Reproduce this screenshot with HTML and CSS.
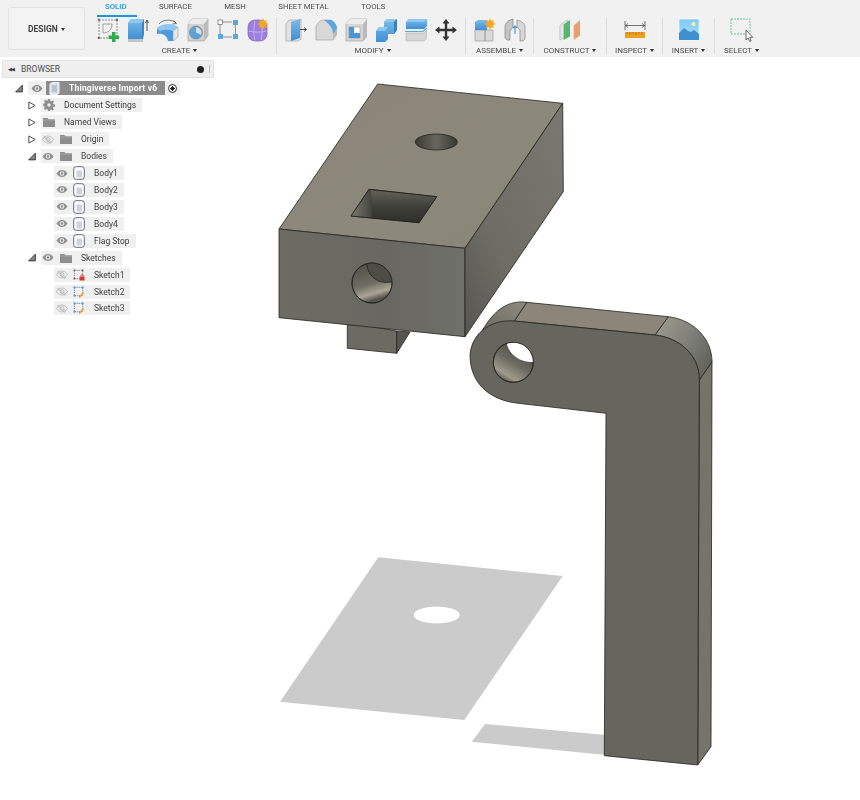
FILE: index.html
```html
<!DOCTYPE html>
<html lang="en">
<head>
<meta charset="utf-8">
<title>Thingiverse Import v6</title>
<link rel="stylesheet" href="styles.css">
</head>
<body>
<svg class="defs" width="0" height="0" aria-hidden="true">
  <defs>
    <symbol id="eye" viewBox="0 0 12 8"><path d="M.5 4C2 1.600 4 .5 6 .5S10 1.600 11.500 4C10 6.400 8 7.500 6 7.500S2 6.400 .5 4Z" fill="#8f8f8f"/><circle cx="6" cy="4" r="2.300" fill="#f0f0f0"/><circle cx="6" cy="4" r="1.300" fill="#8f8f8f"/></symbol>
    <symbol id="eye-off" viewBox="0 0 12 9"><path d="M.5 4.500C2 2.100 4 1 6 1s4 1.100 5.500 3.500C10 6.900 8 8 6 8S2 6.900 .5 4.500Z" fill="none" stroke="#b4b4b4" stroke-width=".8"/><circle cx="6" cy="4.500" r="2" fill="none" stroke="#b4b4b4" stroke-width=".8"/><path d="M2 .8 10 8.200M1 1.500 9 8.800" stroke="#b4b4b4" stroke-width=".7"/></symbol>
    <symbol id="folder" viewBox="0 0 12 10"><path d="M0 1h4.500l1 1.200H12V10H0Z" fill="#8e8e8e"/><path d="M0 3h12" stroke="#b5b5b5" stroke-width=".6"/></symbol>
    <symbol id="body" viewBox="0 0 12 14"><rect x=".7" y=".7" width="10.600" height="12.600" rx="2.500" fill="#fff" stroke="#5f6a7d" stroke-width="1"/><rect x="3.500" y="4.500" width="5.500" height="7" fill="#ccd3dc"/></symbol>
    <symbol id="sketch" viewBox="0 0 13 13"><rect x="1.500" y="1.500" width="9" height="9" fill="none" stroke="#555" stroke-width=".7" stroke-dasharray="1.500 .8"/><g fill="#4a9fe0"><rect x=".5" y=".5" width="2" height="2"/><rect x="9.500" y=".5" width="2" height="2"/><rect x=".5" y="9.500" width="2" height="2"/></g><path d="M7 12 11.500 7" stroke="#f0a030" stroke-width="1.500"/><path d="M6.500 12.500 8 12 7 11Z" fill="#d9534f"/></symbol>
    <symbol id="sketch-lock" viewBox="0 0 13 13"><rect x="1.500" y="1.500" width="9" height="9" fill="none" stroke="#555" stroke-width=".7" stroke-dasharray="1.500 .8"/><g fill="#555"><rect x=".7" y=".7" width="1.600" height="1.600"/><rect x="9.700" y=".7" width="1.600" height="1.600"/><rect x=".7" y="9.700" width="1.600" height="1.600"/></g><rect x="7.200" y="8.200" width="5.300" height="4.300" fill="#d9363a"/><path d="M8.500 8.200V7a1.400 1.400 0 0 1 2.700 0v1.200" fill="none" stroke="#d9363a" stroke-width=".9"/></symbol>
    <linearGradient id="gTop" x1="0" y1="0" x2="1" y2="1"><stop offset="0" stop-color="#8a8578"/><stop offset=".6" stop-color="#8d887c"/><stop offset="1" stop-color="#888478"/></linearGradient>
    <linearGradient id="gFront" x1="0" y1="0" x2="1" y2="0"><stop offset="0" stop-color="#6c6b64"/><stop offset=".6" stop-color="#686761"/><stop offset="1" stop-color="#70706b"/></linearGradient>
    <linearGradient id="gSide" x1="0" y1="1" x2="1" y2="0"><stop offset="0" stop-color="#565651"/><stop offset=".35" stop-color="#6e6c65"/><stop offset="1" stop-color="#7a7870"/></linearGradient>
    <linearGradient id="gHoleTop" x1="0" y1="0" x2="1" y2="0"><stop offset="0" stop-color="#3a3a35"/><stop offset=".5" stop-color="#68665c"/><stop offset="1" stop-color="#383833"/></linearGradient>
    <linearGradient id="gHoleFront" x1="0" y1="0" x2=".3" y2="1"><stop offset="0" stop-color="#4a4a44"/><stop offset=".6" stop-color="#6f6c62"/><stop offset=".85" stop-color="#aba598"/><stop offset="1" stop-color="#55544d"/></linearGradient>
    <linearGradient id="gWall" x1="0" y1="0" x2="0" y2="1"><stop offset="0" stop-color="#63625a"/><stop offset=".5" stop-color="#3f3f3a"/><stop offset="1" stop-color="#2e2e2a"/></linearGradient>
    <linearGradient id="gWallL" x1="0" y1="0" x2="1" y2="0"><stop offset="0" stop-color="#7a7a70"/><stop offset="1" stop-color="#44443e"/></linearGradient>
    <linearGradient id="gArcL" x1="0" y1="1" x2="1" y2="0"><stop offset="0" stop-color="#66655e"/><stop offset="1" stop-color="#8f8a7e"/></linearGradient>
    <linearGradient id="gArcR" x1="0" y1="0" x2="1" y2=".6"><stop offset="0" stop-color="#a29c8f"/><stop offset=".6" stop-color="#7f7f79"/><stop offset="1" stop-color="#65655f"/></linearGradient>
    <linearGradient id="gHoleFlag" x1=".9" y1="0" x2=".3" y2="1"><stop offset="0" stop-color="#3e3e38"/><stop offset=".55" stop-color="#6c6a60"/><stop offset=".85" stop-color="#a09a8c"/><stop offset="1" stop-color="#55544d"/></linearGradient>
    <linearGradient id="iBlue" x1="0" y1="0" x2="0" y2="1"><stop offset="0" stop-color="#7cbcec"/><stop offset="1" stop-color="#3f8fd0"/></linearGradient>
    <linearGradient id="iSky" x1="0" y1="0" x2="0" y2="1"><stop offset="0" stop-color="#7fcaf8"/><stop offset="1" stop-color="#a8ddfb"/></linearGradient>
    <clipPath id="cHoleFront"><circle cx="372" cy="283" r="20"/></clipPath>
    <clipPath id="cHoleFlag"><circle cx="513.300" cy="362.300" r="20"/></clipPath>
  </defs>
</svg>

<header class="toolbar">
  <button class="design" type="button">DESIGN <span class="caret"></span></button>
  <div class="ribbon">
    <nav class="tabs">
      <span class="tab tab-active">SOLID</span>
      <span class="tab">SURFACE</span>
      <span class="tab">MESH</span>
      <span class="tab">SHEET METAL</span>
      <span class="tab">TOOLS</span>
    </nav>
    <div class="groups">
      <section class="group g-create">
        <div class="icons">
          <svg class="ico" viewBox="0 0 22 24"><rect x="2" y="2" width="18" height="18" fill="none" stroke="#777" stroke-width=".8" stroke-dasharray="2 1"/><g fill="#666"><rect x=".8" y=".8" width="2" height="2"/><rect x="19" y=".8" width="2" height="2"/><rect x=".8" y="19" width="2" height="2"/></g><path d="M6 6h9M6 6v9M15 6c0 6-4 9-9 9" fill="none" stroke="#999" stroke-width=".9"/><path d="M15 14h3.500v3.500H22v3.500h-3.500V24H15v-3H11.500v-3.500H15Z" fill="#2eaa4a"/></svg>
          <svg class="ico" viewBox="0 0 22 24"><path d="M1 21h15v3H1Z" fill="#c4c4c4"/><path d="M1 5 4 1h13v15l-1 5H1Z" fill="url(#iBlue)"/><path d="M1 5h14l2-4H4Z" fill="#8cc8f2"/><path d="M15 5l2-4v15l-2 5Z" fill="#3a86c4"/><path d="M20 13V2.500M18.500 5 20 2l1.500 3" fill="none" stroke="#444" stroke-width=".9"/></svg>
          <svg class="ico" viewBox="0 0 22 24"><path d="M0 10C5 5 16 5 21 9L16 13C12 11 6 11 3 13Z" fill="#8cc8f2"/><path d="M0 10 3 13C6 11 12 11 16 13V23H11C10 17 5 15 0 16Z" fill="#4a9ade"/><path d="M16 13 21 9V19L16 23Z" fill="#e8e8e8" stroke="#888" stroke-width=".5"/><path d="M2 6C6 1 15 1 19 5M16.500 2.500 19.500 5.500 15.500 6" fill="none" stroke="#555" stroke-width=".8"/></svg>
          <svg class="ico" viewBox="0 0 22 24"><path d="M1 6 5 1h16v17l-4 5H1Z" fill="#d2d2d2" stroke="#9a9a9a" stroke-width=".6"/><path d="M1 6h16l4-5H5Z" fill="#ececec"/><path d="M17 6l4-5v17l-4 5Z" fill="#bcbcbc"/><circle cx="9" cy="14.500" r="6.500" fill="#5aa3dc" stroke="#777" stroke-width=".6"/><path d="M9 14.500V9a6 6 0 0 1 5.400 8Z" fill="#dcdcdc"/></svg>
          <svg class="ico" viewBox="0 0 22 24"><path d="M6 4h9M3 7v9M18.500 7v9M6 19h9" stroke="#777" stroke-width=".8"/><rect x="1" y="2" width="4.500" height="4.500" fill="#fff" stroke="#666" stroke-width=".7"/><rect x="16" y="2" width="5" height="5" fill="#5ba7e0"/><rect x="1" y="16" width="5" height="5" fill="#5ba7e0"/><rect x="16" y="16" width="5" height="5" fill="#5ba7e0"/></svg>
          <svg class="ico" viewBox="0 0 22 24"><rect x="1" y="2" width="19" height="21" rx="7" fill="#9c7fe0" stroke="#7a5ab8" stroke-width=".7"/><path d="M1.500 13c5 1.500 13 1.500 18 0M8 2.500C6.500 9 6.500 16 8 22.500M14 2.500c1.500 6.500 1.500 13 0 20" fill="none" stroke="#c9b4ee" stroke-width=".9"/><path d="M16 0l1.200 3 2.800-1-1 2.800 3 1.200-3 1.200 1 2.800-2.800-1L16 12l-1.200-3-2.800 1 1-2.800-3-1.200 3-1.200-1-2.800 2.800 1Z" fill="#f5a623"/></svg>
        </div>
        <div class="label">CREATE <span class="caret"></span></div>
      </section>
      <section class="group g-modify">
        <div class="icons">
          <svg class="ico" viewBox="0 0 22 24"><path d="M1 6 4 2h9l3-1v20l-3 2H1Z" fill="#e2e2e2" stroke="#999" stroke-width=".6"/><path d="M6 4l9-3v19l-9 3Z" fill="url(#iBlue)"/><path d="M15 11.500h6M19 9.500l2.500 2-2.500 2" fill="none" stroke="#444" stroke-width="1"/></svg>
          <svg class="ico" viewBox="0 0 22 24"><path d="M1 8C3 4 6 2 9 2h6c4 1 7 5 7 10v4l-4 6H1Z" fill="#d8d8d8" stroke="#999" stroke-width=".6"/><path d="M9 2h7c3 1 6 5 6 9l-4 5C18 10 14 6 9 2Z" fill="#5ba7e0"/><path d="M18 16l4-5v5l-4 6Z" fill="#bbb"/></svg>
          <svg class="ico" viewBox="0 0 22 24"><path d="M1 6 5 1h17v17l-4 5H1Z" fill="#d6d6d6" stroke="#999" stroke-width=".6"/><path d="M1 6h17l4-5H5Z" fill="#ececec"/><path d="M18 6l4-5v17l-4 5Z" fill="#bbb"/><rect x="4" y="9" width="11" height="11" fill="#fff" stroke="#888" stroke-width=".5"/><path d="M4 9h5v6h6v5H4Z" fill="#4a97d6"/></svg>
          <svg class="ico" viewBox="0 0 22 24"><path d="M1 13l3-4h5V4l3-3h10v11l-3 4h-6v5l-3 3H1Z" fill="url(#iBlue)"/><path d="M9 4h10l3-3H12ZM1 13h9l3-4H4Z" fill="#8cc8f2"/><path d="M19 4l3-3v11l-3 4Z" fill="#3a7fbf"/></svg>
          <svg class="ico" viewBox="0 0 22 24"><path d="M1 15h18l3-3v8l-3 3H1Z" fill="#d6d6d6" stroke="#aaa" stroke-width=".5"/><path d="M1 4 4 1h18v7l-3 3H1Z" fill="url(#iBlue)"/><path d="M1 4h18l3-3H4Z" fill="#8cc8f2"/><path d="M0 13.500h18L22 10" fill="none" stroke="#5ba7e0" stroke-width="1.200"/></svg>
          <svg class="ico" viewBox="0 0 22 24"><path d="M11 1l3.500 4.500h-2.300v5.300h5.300V8.500L22 12l-4.500 3.500v-2.300h-5.300v5.300h2.300L11 23l-3.500-4.500h2.300v-5.300H4.500v2.300L0 12l4.500-3.500v2.300h5.300V5.500H7.500Z" fill="#333"/></svg>
        </div>
        <div class="label">MODIFY <span class="caret"></span></div>
      </section>
      <section class="group g-assemble">
        <div class="icons">
          <svg class="ico" viewBox="0 0 22 24"><path d="M1 12h10v11H1ZM11 12h8v11h-8Z" fill="#dadada" stroke="#8d8d8d" stroke-width=".6"/><path d="M1 4l3-2h9v10H1Z" fill="url(#iBlue)"/><path d="M16 0l1.200 3 2.800-1-1 2.800 3 1.200-3 1.200 1 2.800-2.800-1L16 12l-1.200-3-2.800 1 1-2.800-3-1.200 3-1.200-1-2.800 2.800 1Z" fill="#f5a623"/></svg>
          <svg class="ico" viewBox="0 0 22 24"><path d="M1 8c1-4 4-6 8-7v8l-3 4v9H3l-2-2Z" fill="#c5c5c5" stroke="#777" stroke-width=".6"/><path d="M13 2c5 1 8 4 8 7v12l-2 2h-3V12l-3-3Z" fill="#d8d8d8" stroke="#777" stroke-width=".6"/><path d="M11 8v8M9 10l2-2 2 2" fill="none" stroke="#4a97d6" stroke-width="1.100"/></svg>
        </div>
        <div class="label">ASSEMBLE <span class="caret"></span></div>
      </section>
      <section class="group g-construct">
        <div class="icons">
          <svg class="ico" viewBox="0 0 24 24"><path d="M1 7l8-6v17l-8 5Z" fill="#e6e6e6" stroke="#999" stroke-width=".5"/><path d="M5 6l7-5v18l-7 4Z" fill="#55b86e"/><path d="M16 7l7-6v17l-7 5Z" fill="#e8a070"/></svg>
        </div>
        <div class="label">CONSTRUCT <span class="caret"></span></div>
      </section>
      <section class="group g-inspect">
        <div class="icons">
          <svg class="ico" viewBox="0 0 22 24"><path d="M1 3v9M21 3v9M1 7.500h20M4 5.500 1.500 7.500 4 9.500M18 5.500l2.500 2-2.500 2" fill="none" stroke="#555" stroke-width=".8"/><rect x="1" y="14" width="20" height="6" fill="#f0a020"/><path d="M3 14v2M6 14v3M9 14v2M12 14v3M15 14v2M18 14v3" stroke="#8a5a10" stroke-width=".6"/></svg>
        </div>
        <div class="label">INSPECT <span class="caret"></span></div>
      </section>
      <section class="group g-insert">
        <div class="icons">
          <svg class="ico" viewBox="0 0 22 24"><rect x="1" y="1" width="20" height="21" fill="url(#iSky)" stroke="#fff" stroke-width=".6"/><path d="M1 15l5-5 4 3 3 1 3-2 5 4v6H1Z" fill="#3f8fcc"/><circle cx="15.500" cy="6" r="2" fill="#f5efb0"/></svg>
        </div>
        <div class="label">INSERT <span class="caret"></span></div>
      </section>
      <section class="group g-select">
        <div class="icons">
          <svg class="ico ico-select" viewBox="0 0 24 24"><rect x="1" y="1" width="19" height="15" fill="none" stroke="#5cc184" stroke-width=".9" stroke-dasharray="2 1"/><path d="M16 12v10l2.200-2 1.500 3.500 1.500-.7-1.500-3.300 3-.2Z" fill="#fff" stroke="#444" stroke-width=".8"/></svg>
        </div>
        <div class="label">SELECT <span class="caret"></span></div>
      </section>
    </div>
  </div>
</header>

<main class="viewport">
  <svg class="model" viewBox="0 57 860 743" aria-label="3D model">
    <g class="shadow">
      <path fill-rule="evenodd" d="M378.300 557.300 562.700 576 464.300 720 280 701.700ZM413.700 615a23 8.500 0 1 0 46 0a23 8.500 0 1 0-46 0Z"/>
      <path d="M485 724 606 735V755L471.700 741.700Z"/>
    </g>

    <g class="edge">
      <path fill="#6b6a63" d="M347.300 322V348.300L396.700 353.300V331Z"/>
      <path fill="#55544e" d="M396.700 331V353.300L410 332Z"/>
      <path fill="url(#gTop)" d="M377.700 84 562.700 103.300 465 248.300 279 229Z"/>
      <path fill="url(#gFront)" d="M279 229 465 248.300V336.700L279 317.700Z"/>
      <path fill="url(#gSide)" d="M465 248.300 562.700 103.300 563.300 191.700 465 336.700Z"/>
      <ellipse cx="436.300" cy="142" rx="21" ry="8" fill="url(#gHoleTop)"/>
      <path fill="#34342f" d="M351 216 369 189.300 436.700 196.700 419 222.700Z"/>
      <path fill="url(#gWall)" stroke="none" d="M371 190 436.700 196.700 419 222.700 372 217.500Z"/>
      <path fill="url(#gWallL)" stroke="none" d="M351 216 369 189.300 371 190 372 217.500Z"/>
      <path fill="none" d="M351 216 369 189.300 436.700 196.700 419 222.700Z"/>
      <circle cx="372" cy="283" r="20" fill="url(#gHoleFront)"/>
      <path clip-path="url(#cHoleFront)" fill="#4d4c46" d="M366.500 262C367.500 277 379 286 395 281L395 258Z"/>
      <circle cx="372" cy="283" r="20" fill="none"/>
    </g>

    <g class="edge">
      <path fill="#76746a" d="M699.300 380 712 361.700 711 746.700 697.700 765Z"/>
      <path fill="url(#gArcR)" d="M668.300 316.700C695 320 712 340 712 361.700L699.300 380C699.300 355 680 338 655 335Z"/>
      <path fill="#8b8679" d="M526.700 302.300 668.300 316.700 655 335 514.300 321Z"/>
      <path fill="url(#gArcL)" d="M514.300 321 526.700 302.300C510 300 495 308 482 331L492 340Z"/>
      <path fill="#66655e" d="M514.300 321 655 335C680 338 699.300 355 699.300 380L697.700 765 604.300 755.700 606 413.300 518.300 403.300C488 400 470 382 470 355 472 330 495 319 514.300 321Z"/>
      <circle cx="513.300" cy="362.300" r="20" fill="url(#gHoleFlag)"/>
      <path clip-path="url(#cHoleFlag)" fill="#fff" stroke="none" d="M506.700 343C509 355 520 363 535 362L536 340Z"/>
      <circle cx="513.300" cy="362.300" r="20" fill="none"/>
    </g>
  </svg>

  <aside class="browser">
    <div class="browser-head">
      <span class="collapse">◀◀</span>
      <span class="browser-title">BROWSER</span>
      <span class="minus"></span>
      <span class="grip"></span>
    </div>
    <ul class="tree">
      <li class="row l0"><svg class="exp" viewBox="0 0 9 9"><path d="M.7 8.300 8.300.7V8.300Z" fill="#888" stroke="#222" stroke-width=".9"/></svg>
        <div class="pill pill-root">
          <svg class="eye"><use href="#eye"/></svg>
          <div class="active-doc">
            <svg class="doc" viewBox="0 0 12 14"><path d="M1 2.500 3 .5h8V12l-2 1.500H1Z" fill="#dfe6ee" stroke="#fff" stroke-width=".8"/><path d="M3 3h6v8H3Z" fill="#b8c4d2"/></svg>
            <span class="name-root">Thingiverse Import v6</span>
          </div>
          <span class="radio"></span>
        </div>
      </li>
      <li class="row l1"><svg class="exp" viewBox="0 0 9 10"><path d="M1 1 8 5 1 9Z" fill="#fff" stroke="#222" stroke-width=".9"/></svg>
        <div class="pill"><svg class="gear" viewBox="0 0 12 12"><path d="M5 0h2l.3 1.700 1.300.5L10 1.300 11 2.700l-1 1.300.5 1.200L12 5.500v2l-1.500.2-.5 1.300 1 1.300-1.400 1.300-1.300-1-1.300.5L7 12H5l-.3-1.600-1.300-.5-1.300 1L.7 9.600l1-1.300-.5-1.300L0 6.800v-2l1.500-.2.500-1.200-1-1.300L2.400.8l1.300 1 1.100-.5Z" fill="#8e8e8e"/><circle cx="6" cy="6" r="1.700" fill="#f0f0f0"/></svg><span class="name">Document Settings</span></div>
      </li>
      <li class="row l1"><svg class="exp" viewBox="0 0 9 10"><path d="M1 1 8 5 1 9Z" fill="#fff" stroke="#222" stroke-width=".9"/></svg>
        <div class="pill"><svg class="folder"><use href="#folder"/></svg><span class="name">Named Views</span></div>
      </li>
      <li class="row l1"><svg class="exp" viewBox="0 0 9 10"><path d="M1 1 8 5 1 9Z" fill="#fff" stroke="#222" stroke-width=".9"/></svg>
        <div class="pill"><svg class="eye"><use href="#eye-off"/></svg><svg class="folder"><use href="#folder"/></svg><span class="name">Origin</span></div>
      </li>
      <li class="row l1"><svg class="exp" viewBox="0 0 9 9"><path d="M.7 8.300 8.300.7V8.300Z" fill="#888" stroke="#222" stroke-width=".9"/></svg>
        <div class="pill"><svg class="eye"><use href="#eye"/></svg><svg class="folder"><use href="#folder"/></svg><span class="name">Bodies</span></div>
      </li>
      <li class="row l2"><div class="pill"><svg class="eye"><use href="#eye"/></svg><svg class="item"><use href="#body"/></svg><span class="name">Body1</span></div></li>
      <li class="row l2"><div class="pill"><svg class="eye"><use href="#eye"/></svg><svg class="item"><use href="#body"/></svg><span class="name">Body2</span></div></li>
      <li class="row l2"><div class="pill"><svg class="eye"><use href="#eye"/></svg><svg class="item"><use href="#body"/></svg><span class="name">Body3</span></div></li>
      <li class="row l2"><div class="pill"><svg class="eye"><use href="#eye"/></svg><svg class="item"><use href="#body"/></svg><span class="name">Body4</span></div></li>
      <li class="row l2"><div class="pill"><svg class="eye"><use href="#eye"/></svg><svg class="item"><use href="#body"/></svg><span class="name">Flag Stop</span></div></li>
      <li class="row l1"><svg class="exp" viewBox="0 0 9 9"><path d="M.7 8.300 8.300.7V8.300Z" fill="#888" stroke="#222" stroke-width=".9"/></svg>
        <div class="pill"><svg class="eye"><use href="#eye"/></svg><svg class="folder"><use href="#folder"/></svg><span class="name">Sketches</span></div>
      </li>
      <li class="row l2"><div class="pill"><svg class="eye"><use href="#eye-off"/></svg><svg class="item"><use href="#sketch-lock"/></svg><span class="name">Sketch1</span></div></li>
      <li class="row l2"><div class="pill"><svg class="eye"><use href="#eye-off"/></svg><svg class="item"><use href="#sketch"/></svg><span class="name">Sketch2</span></div></li>
      <li class="row l2"><div class="pill"><svg class="eye"><use href="#eye-off"/></svg><svg class="item"><use href="#sketch"/></svg><span class="name">Sketch3</span></div></li>
    </ul>
  </aside>
</main>
</body>
</html>
```

FILE: styles.css
```css
* { box-sizing: border-box; }
html, body { margin: 0; padding: 0; }
body {
  width: 860px;
  height: 800px;
  overflow: hidden;
  background: #fff;
  font-family: Roboto, "Liberation Sans", sans-serif;
  color: #3f3f3f;
  display: flex;
  flex-direction: column;
}
.defs { position: absolute; }

.toolbar {
  display: flex;
  flex: 0 0 57px;
  height: 57px;
  background: #f1f1f1;
  filter: blur(.25px);
}
.design {
  flex: 0 0 77px;
  height: 43px;
  margin: 7px 12px 0 8px;
  padding: 0;
  border: 1px solid #e2e2e2;
  border-radius: 3px;
  background: #f3f3f3;
  font: 700 8.500px Roboto, sans-serif;
  color: #444;
}
.caret {
  display: inline-block;
  width: 0;
  height: 0;
  margin-left: 1px;
  vertical-align: 1px;
  border-left: 2.500px solid transparent;
  border-right: 2.500px solid transparent;
  border-top: 3px solid #333;
}

.ribbon { display: flex; flex-direction: column; flex: 1; }
.tabs {
  display: flex;
  gap: 32.500px;
  height: 18px;
  padding: 2px 0 0 8px;
  font-size: 7.800px;
  line-height: 10px;
  color: #4d4d4d;
}
.tab { position: relative; }
.tab-active { color: #1d9ad6; font-weight: 500; }
.tab-active::after {
  content: "";
  position: absolute;
  left: -8px;
  right: -10px;
  top: 13px;
  height: 2px;
  background: #1d9ad6;
}

.groups { display: flex; }
.group {
  display: flex;
  flex-direction: column;
  align-items: center;
  height: 36px;
}
.group + .group { border-left: 1px solid #dbdbdb; }
.g-create { flex: 0 0 179px; align-items: flex-start; }
.g-create .label { align-self: center; margin-right: 14px; }
.g-modify { flex: 0 0 189px; padding-left: 8px; align-items: flex-start; }
.g-modify .label { align-self: center; margin-right: 5px; }
.g-assemble { flex: 0 0 68px; }
.g-construct { flex: 0 0 73px; }
.g-inspect { flex: 0 0 56px; }
.g-insert { flex: 0 0 52px; }
.g-select { flex: 0 0 54px; }
.icons { display: flex; gap: 8px; height: 24px; align-items: flex-start; }
.ico { width: 22px; height: 24px; display: block; }
.ico-select { width: 24px; }
.label {
  margin-top: 3px;
  font-size: 8px;
  line-height: 11px;
  color: #4d4d4d;
  white-space: nowrap;
}

.viewport { position: relative; flex: 1; overflow: hidden; background: #fff; }
.model { position: absolute; left: 0; top: 0; width: 860px; height: 743px; filter: blur(.25px); }
.shadow { fill: #cbcbcb; filter: blur(.5px); }
.edge { stroke: #23231f; stroke-width: .8; stroke-linejoin: round; }

.browser { position: absolute; left: 2px; top: 3px; width: 212px; filter: blur(.25px); }
.browser-head {
  display: flex;
  align-items: center;
  height: 18px;
  padding: 0 3px 0 5px;
  background: #efefef;
  border: 1px solid #e2e2e2;
  font-size: 8.500px;
  color: #4d4d4d;
}
.collapse { font-size: 5px; width: 13px; color: #333; letter-spacing: -1px; }
.browser-title { flex: 1; }
.minus {
  width: 7px;
  height: 7px;
  border-radius: 50%;
  background: #222;
  margin-right: 5px;
}
.grip { width: 1px; height: 8px; background: #bbb; }

.tree { list-style: none; margin: 2px 0 0; padding: 0; }
.row { display: flex; align-items: center; height: 16.930px; }
.l0 { padding-left: 13px; }
.l1 { padding-left: 26px; }
.l2 { padding-left: 52px; }
.exp { flex: 0 0 8px; width: 8px; height: 9px; margin-right: 5px; }
.pill {
  display: flex;
  align-items: center;
  height: 14px;
  padding: 0 6px 0 1px;
  background: #f0f0f0;
  font-size: 8.500px;
  color: #3d3d3d;
  white-space: nowrap;
}
.l2 .pill { padding-left: 2px; }
.eye { flex: 0 0 12px; width: 12px; height: 9px; }
.folder { flex: 0 0 12px; width: 12px; height: 10px; margin-left: 6px; }
.pill > .folder:first-child { margin-left: 1px; }
.gear { flex: 0 0 12px; width: 12px; height: 12px; margin-left: 1px; }
.item { flex: 0 0 12px; width: 12px; height: 14px; margin-left: 5px; }
.name { margin-left: 9px; }
.pill-root { padding: 0 3px; }
.active-doc {
  display: flex;
  align-items: center;
  width: 119px;
  height: 14px;
  margin-left: 3px;
  padding-left: 3px;
  background: #8c8c8c;
}
.doc { width: 11px; height: 13px; flex: 0 0 11px; }
.name-root { margin-left: 9px; color: #fff; font-weight: 700; letter-spacing: .2px; }
.radio {
  width: 9px;
  height: 9px;
  margin-left: 3px;
  border-radius: 50%;
  border: 1px solid #333;
  background: radial-gradient(circle, #222 0 2px, #fff 2.200px);
}
```
